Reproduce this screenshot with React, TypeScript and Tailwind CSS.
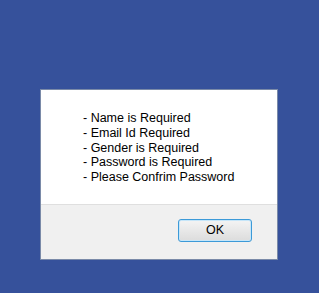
export default function App() {
  const errors = [
    "- Name is Required",
    "- Email Id Required",
    "- Gender is Required",
    "- Password is Required",
    "- Please Confrim Password",
  ];

  return (
    <div className="w-[319px] h-[293px] bg-[#36519b] pt-[89px] pl-[40px] font-['Liberation_Sans',Arial,sans-serif]">
      <div className="w-[238px] h-[171px] flex flex-col border border-[#7a8aa8] bg-white">
        <div className="h-[114px] pt-[21px] pl-[42px] text-[12.5px] leading-[14.8px] text-black">
          {errors.map((line) => (
            <div key={line}>{line}</div>
          ))}
        </div>
        <div className="flex-1 flex justify-end items-start pt-[14px] pr-[25px] bg-[#f0f0f0] border-t border-[#dfdfdf]">
          <button className="w-[74px] h-[23px] rounded-[3px] border border-[#3c9ad8] bg-gradient-to-b from-[#f4f4f4] to-[#dcdcdc] text-[12.5px] text-black shadow-[inset_0_0_0_1px_#c6e6f9]">
            OK
          </button>
        </div>
      </div>
    </div>
  );
}
